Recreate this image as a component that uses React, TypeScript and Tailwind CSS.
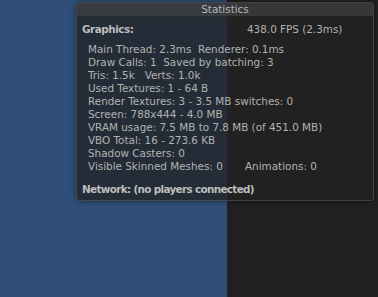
import React from "react";

const lines = [
  "Main Thread: 2.3ms  Renderer: 0.1ms",
  "Draw Calls: 1  Saved by batching: 3",
  "Tris: 1.5k   Verts: 1.0k",
  "Used Textures: 1 - 64 B",
  "Render Textures: 3 - 3.5 MB switches: 0",
  "Screen: 788x444 - 4.0 MB",
  "VRAM usage: 7.5 MB to 7.8 MB (of 451.0 MB)",
  "VBO Total: 16 - 273.6 KB",
  "Shadow Casters: 0",
];

export default function App() {
  return (
    <div
      className="relative w-[378px] h-[297px] flex overflow-hidden"
      style={{ fontFamily: '"DejaVu Sans", sans-serif' }}
    >
      <div className="w-[227px] h-full bg-[#2f4f7a]" />
      <div className="flex-1 h-full bg-[#212121]" />

      <div className="absolute left-[76px] top-[2px] w-[298px] h-[199px] rounded-[4px] bg-[rgba(34,34,34,0.75)] border border-[rgba(90,90,90,0.6)] shadow-[0_0_6px_rgba(0,0,0,0.5)] overflow-hidden flex flex-col text-[10.4px] leading-[13px] text-[#b2b2b2]">
        <div className="h-[14px] bg-[rgba(70,70,70,0.6)] flex items-center justify-center text-[10.4px] text-[#b8b8b8] border-b border-[rgba(0,0,0,0.3)]">
          Statistics
        </div>
        <div className="flex flex-col pl-[5px] pt-[6px]">
          <div className="flex">
            <span className="w-[165px] font-bold tracking-[-0.45px] text-[#bdbdbd]">Graphics:</span>
            <span>438.0 FPS (2.3ms)</span>
          </div>
          <div className="flex flex-col pl-[6px] pt-[7px]">
            {lines.map((l) => (
              <div key={l} className="whitespace-pre">
                {l}
              </div>
            ))}
            <div className="flex whitespace-pre">
              <span className="w-[157px]">Visible Skinned Meshes: 0</span>
              <span>Animations: 0</span>
            </div>
          </div>
          <div className="font-bold tracking-[-0.65px] text-[#bdbdbd] pt-[10px]">
            Network: (no players connected)
          </div>
        </div>
      </div>
    </div>
  );
}
